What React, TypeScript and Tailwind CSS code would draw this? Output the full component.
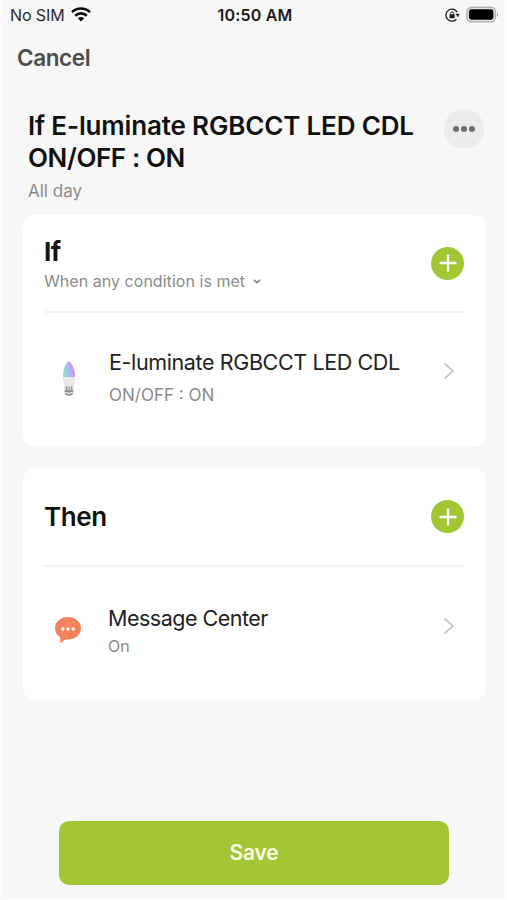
import type { ReactNode } from "react";

//________________ ICONS _______________
const WifiIcon = () => (
    <svg width="20" height="15" viewBox="0 0 20 15" fill="none" stroke="#0b0b0b" strokeWidth="2.6">
        <path d="M1 5.100C6 .3 14 .3 19 5.100" />
        <path d="M4.200 8.700c3.400-3.100 8.200-3.100 11.600 0" />
        <path d="M10 14.500 6.800 11.300c1.800-1.600 4.600-1.600 6.400 0Z" fill="#0b0b0b" stroke="none" />
    </svg>
)

const LockIcon = () => (
    <svg width="16" height="14" viewBox="0 0 16 14" fill="none">
        <path d="M11.400 11.200A6 6 0 1 1 12.200 4.200" stroke="#2a2a2a" strokeWidth="1.400" />
        <path d="M10.400 5.700h4.400l-1.800 3.600Z" fill="#2a2a2a" />
        <rect x="4.500" y="6.200" width="5.200" height="4" rx=".6" fill="#1c1c1c" />
        <path d="M5.700 6.500V5.300a1.400 1.400 0 0 1 2.800 0v1.200" stroke="#1c1c1c" strokeWidth="1" />
    </svg>
)

const BatteryIcon = () => (
    <svg width="34" height="18" viewBox="0 0 34 18">
        <rect x="1" y="1.200" width="28.400" height="14.600" rx="4.500" fill="#e4e4e4" stroke="#b2b2b2" strokeWidth="1.400" />
        <rect x="3" y="3.300" width="24.400" height="10.400" rx="2.400" fill="#000" />
        <path d="M31 6.200c1.600.6 1.600 4 0 4.600Z" fill="#a9a9a9" />
    </svg>
)

const BulbIcon = () => (
    <svg width="14" height="38" viewBox="0 0 14 38">
        <defs>
            <linearGradient id="glow" x1="0" y1=".7" x2="1" y2=".4">
                <stop offset="0" stopColor="#8fe6d2" />
                <stop offset=".4" stopColor="#a3c3ea" />
                <stop offset=".75" stopColor="#c99af0" />
                <stop offset="1" stopColor="#d5a6ee" />
            </linearGradient>
        </defs>
        <path d="M6.800 1C3.800 3 1 9.500 1 14v3.500h12V14C13 9.500 9.800 3 6.800 1Z" fill="url(#glow)" />
        <path d="M1 17h12c0 4-.8 7.200-1.700 9.500H2.700C1.800 24.200 1 21 1 17Z" fill="#e8e8ec" />
        <rect x="2.600" y="26" width="8.800" height="8.500" rx="1.500" fill="#d4d4d4" />
        <path d="M2.800 31.200h8.400M3.300 33.600q3.700 3.200 7.400 0" stroke="#707070" strokeWidth="1.200" fill="none" />
        <path d="M4.300 26.500v4.200M7 27v6M9.700 26.500v4.200" stroke="#8a8a8a" strokeWidth=".9" />
    </svg>
)

const MessageIcon = () => (
    <svg width="28" height="28" viewBox="0 0 28 28">
        <path d="M14 1C6.800 1 1 5.900 1 12.200c0 3.700 2 7 5.200 9l.2 6.100 5.200-4c.8.100 1.600.2 2.400.2 7.200 0 13-5 13-11.300S21.200 1 14 1Z" fill="#f5825f" />
        <circle cx="8.800" cy="13" r="1.700" fill="#fff" />
        <circle cx="14" cy="13" r="1.700" fill="#fff" />
        <circle cx="19.200" cy="13" r="1.700" fill="#fff" />
    </svg>
)

const ChevronRight = () => (
    <svg width="12" height="18" viewBox="0 0 12 18" fill="none" stroke="#c8c8c8" strokeWidth="1.700">
        <path d="m1.500 1.500 8.500 7.500-8.500 7.500" />
    </svg>
)

//________________ PARTS _______________
const AddButton = () => (
    <button aria-label="Add" className="flex size-[33px] items-center justify-center rounded-full bg-[#a2c634]">
        <svg width="18" height="18" viewBox="0 0 18 18" stroke="#fff" strokeWidth="2.400">
            <path d="M9 .5v17M.5 9h17" />
        </svg>
    </button>
)

interface IRow {
    icon: ReactNode;
    title: ReactNode;
    detail: ReactNode;
}

const Row = ({ icon, title, detail }: IRow) => (
    <div className="flex items-start pr-[9px]">
        <div className="flex w-16 shrink-0 pl-[9px]">{icon}</div>
        <div className="flex-1 whitespace-nowrap">
            {title}
            {detail}
        </div>
        <div className="pt-[16px]">
            <ChevronRight />
        </div>
    </div>
)

const App = () => {
    return (
        <div className="h-[900px] w-[507px] bg-[#fdfdfd] pr-[3px] pb-[2px] pl-[2px] font-['Inter',sans-serif]">
            <div className="flex h-full flex-col bg-[#f7f7f7]">
                <header className="grid h-[29px] grid-cols-3 items-center pr-[4px] pl-[8px]">
                    <div className="flex items-center gap-[6px]">
                        <span className="text-[16px] leading-5 tracking-[-0.1px] text-[#2b2b2b]">No SIM</span>
                        <WifiIcon />
                    </div>
                    <span className="text-center text-[16px] leading-5 font-semibold tracking-[0.2px] whitespace-nowrap text-[#1a1a1a]">10:50 AM</span>
                    <div className="flex items-center justify-end gap-[5px]">
                        <LockIcon />
                        <BatteryIcon />
                    </div>
                </header>

                <div className="flex h-[57px] items-center pt-px pl-[15px]">
                    <button className="text-[22.5px] leading-7 font-semibold tracking-[-0.4px] text-[#4c4c4c]">Cancel</button>
                </div>

                <section className="flex justify-between pt-6 pr-5 pl-[26px]">
                    <div>
                        <h1 className="text-[26px] leading-8 font-semibold tracking-[-0.16px] whitespace-nowrap text-[#111]">
                            If E-luminate RGBCCT LED CDL
                            <br />
                            <span className="tracking-[-0.4px]">ON/OFF : ON</span>
                        </h1>
                        <p className="mt-[7px] text-[17px] leading-5 text-[#8b8b8b]">All day</p>
                    </div>
                    <button aria-label="More" className="-mt-px flex size-10 items-center justify-center gap-[2px] rounded-full bg-[#ececec]">
                        <span className="size-[6px] rounded-full bg-[#6f6f6f]" />
                        <span className="size-[6px] rounded-full bg-[#6f6f6f]" />
                        <span className="size-[6px] rounded-full bg-[#6f6f6f]" />
                    </button>
                </section>

                <main className="mt-[14px] flex flex-col gap-[22px] pr-[18px] pl-[21px]">
                    <section className="h-[231px] rounded-xl bg-white pr-[22px] pl-[21px]">
                        <div className="flex h-[98px] items-center justify-between border-b-2 border-[#f3f3f3]">
                            <div className="pt-[5px]">
                                <h2 className="text-[26px] leading-8 font-bold tracking-[-0.5px] text-[#151515]">If</h2>
                                <button className="flex items-center gap-2 text-[16px] leading-[27px] tracking-[0.04px] text-[#8b8b8b]">
                                    When any condition is met
                                    <svg width="8" height="5" viewBox="0 0 8 5" fill="none" stroke="#777" strokeWidth="1.500">
                                        <path d="m.7.7 3.300 3.100L7.300.7" />
                                    </svg>
                                </button>
                            </div>
                            <AddButton />
                        </div>
                        <div className="pt-[33px]">
                            <Row
                                icon={<div className="pt-[14px] pl-[9px]"><BulbIcon /></div>}
                                title={<h3 className="pl-px text-[21.5px] leading-8 tracking-[-0.38px] text-[#222]">E-luminate RGBCCT LED CDL</h3>}
                                detail={<p className="pl-px text-[17px] leading-[34px] text-[#8b8b8b]">ON/OFF : ON</p>}
                            />
                        </div>
                    </section>

                    <section className="h-[232px] rounded-xl bg-white pr-[22px] pl-[21px]">
                        <div className="flex h-[99px] items-center justify-between border-b-2 border-[#f3f3f3]">
                            <h2 className="pt-px text-[26px] leading-8 font-semibold tracking-[-0.4px] text-[#111]">Then</h2>
                            <AddButton />
                        </div>
                        <div className="pt-[34px]">
                            <Row
                                icon={<div className="pt-[15px] pl-px"><MessageIcon /></div>}
                                title={<h3 className="pt-px text-[21.5px] leading-8 tracking-[-0.5px] text-[#222]">Message Center</h3>}
                                detail={<p className="text-[16px] leading-6 text-[#8b8b8b]">On</p>}
                            />
                        </div>
                    </section>
                </main>

                <footer className="mt-auto pr-[55px] pb-[13px] pl-[57px]">
                    <button className="h-16 w-full rounded-[10px] bg-[#a2c634] text-[21px] font-semibold tracking-[-0.2px] text-[#fbffea]">Save</button>
                </footer>
            </div>
        </div>
    )
}

export default App;
